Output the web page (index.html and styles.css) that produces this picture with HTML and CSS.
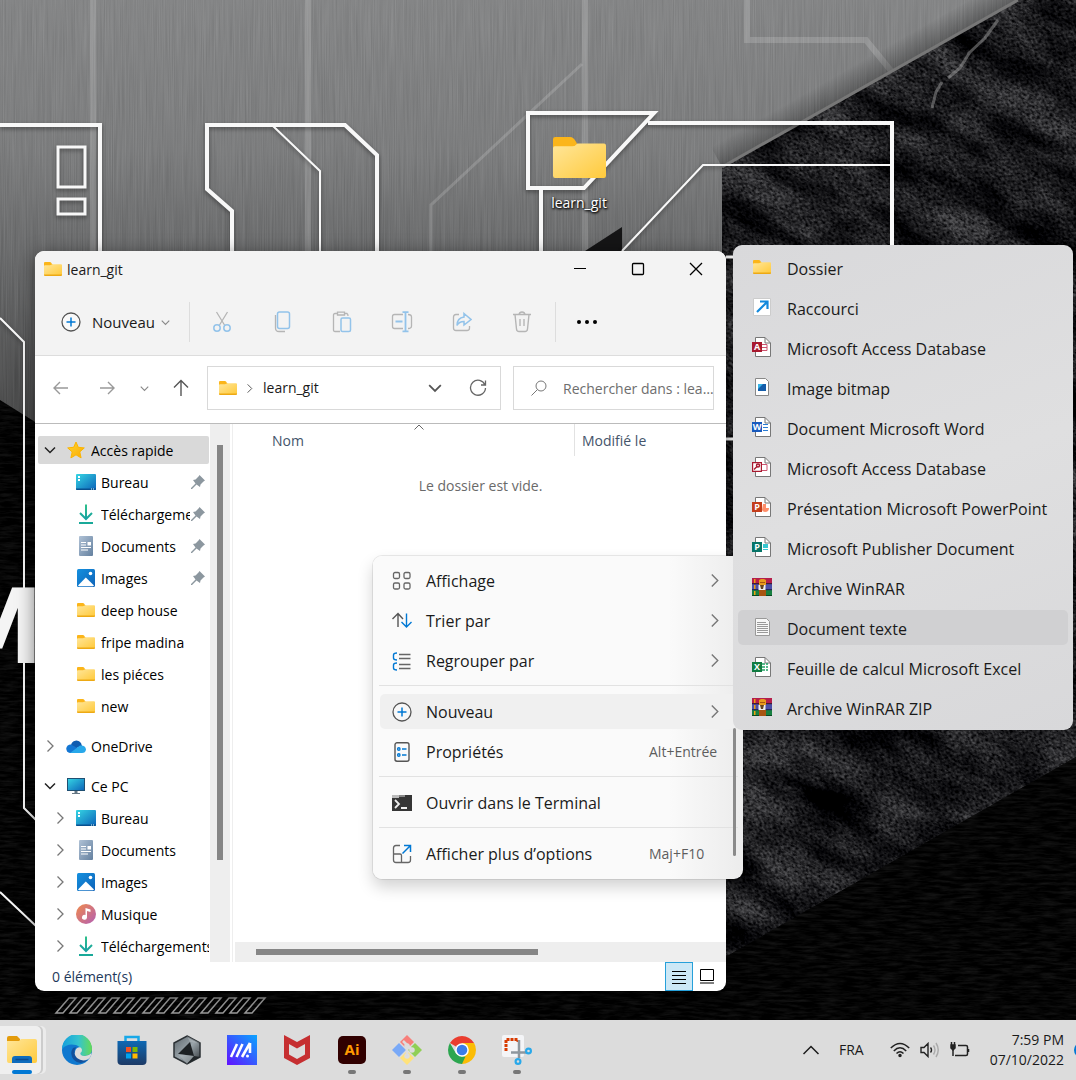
FILE: index.html
```html
<!DOCTYPE html>
<html lang="fr">
<head>
<meta charset="utf-8">
<title>learn_git</title>
<link rel="stylesheet" href="styles.css">
</head>
<body>
<svg class="defs" aria-hidden="true">
  <defs>
    <linearGradient id="gFolder" x1="0" y1="0" x2="1" y2="1"><stop offset="0" stop-color="#ffe69a"/><stop offset="1" stop-color="#ffca3c"/></linearGradient>
    <linearGradient id="gDesk" x1="0" y1="0" x2="1" y2="1"><stop offset="0" stop-color="#36d6e4"/><stop offset="1" stop-color="#0b62b8"/></linearGradient>
    <linearGradient id="gDown" x1="0" y1="0" x2="0" y2="1"><stop offset="0" stop-color="#2fc08a"/><stop offset="1" stop-color="#17a2a2"/></linearGradient>
    <linearGradient id="gDoc" x1="0" y1="0" x2="1" y2="1"><stop offset="0" stop-color="#b0c2d6"/><stop offset="1" stop-color="#64809f"/></linearGradient>
    <linearGradient id="gImg" x1="0" y1="0" x2="1" y2="1"><stop offset="0" stop-color="#1490df"/><stop offset="1" stop-color="#0f63b8"/></linearGradient>
    <linearGradient id="gMus" x1="0" y1="0" x2="1" y2="1"><stop offset="0" stop-color="#f08a4b"/><stop offset="1" stop-color="#b35fb4"/></linearGradient>
    <linearGradient id="gStar" x1="0" y1="0" x2="1" y2="1"><stop offset="0" stop-color="#ffd633"/><stop offset="1" stop-color="#fba900"/></linearGradient>
    <linearGradient id="gStore" x1="0" y1="0" x2="0" y2="1"><stop offset="0" stop-color="#0e68b3"/><stop offset="1" stop-color="#1d3a66"/></linearGradient>
    <linearGradient id="gMa" x1="1" y1="0" x2="0" y2="1"><stop offset="0" stop-color="#0aa5ff"/><stop offset="1" stop-color="#6210ff"/></linearGradient>
    <linearGradient id="gEdgeTop" x1="0" y1="0" x2="1" y2="0"><stop offset="0" stop-color="#149fdc"/><stop offset=".55" stop-color="#35c3cf"/><stop offset="1" stop-color="#65db55"/></linearGradient>
    <linearGradient id="gCube" x1="0" y1="0" x2="1" y2="1"><stop offset="0" stop-color="#5c656b"/><stop offset=".5" stop-color="#9aa4aa"/><stop offset="1" stop-color="#2c3135"/></linearGradient>

    <symbol id="i-folder" viewBox="0 0 18 14"><path fill="#fbb51a" d="M0 1Q0 0 1 0H6Q7 0 8 2L9 3V6H0Z"/><path fill="url(#gFolder)" d="M0 4Q0 3.200 1 3.200H6L8.500 2.300H17Q18 2.300 18 3.300V13H0Z"/><path fill="#eda914" d="M0 12.600H18V13.200Q18 14 17 14H1Q0 14 0 13.200Z"/></symbol>
    <symbol id="i-star" viewBox="0 0 18 18"><path fill="url(#gStar)" stroke="#fbb400" stroke-width="1" stroke-linejoin="round" d="M9 1 11.300 6.300 17.300 6.900 12.800 10.900 14.100 16.900 9 13.800 3.900 16.900 5.200 10.900 .7 6.900 6.700 6.300Z"/></symbol>
    <symbol id="i-desktop" viewBox="0 0 20 16"><rect width="20" height="16" rx="1" fill="url(#gDesk)"/><path fill="#fff" d="M2 2h2v2H2zM2 5h2v2H2z"/><path fill="#08508f" d="M0 14.500h20V15q0 1-1 1H1q-1 0-1-1z"/><path fill="#dff" d="M15 14.500h1v1h-1zM17 14.500h1v1h-1z"/></symbol>
    <symbol id="i-download" viewBox="0 0 16 20"><path fill="none" stroke="url(#gDown)" stroke-width="2" d="M8 .5V15M2 9 8 15 14 9"/><path fill="#19a999" d="M1 18h14v2H1z"/></symbol>
    <symbol id="i-doc" viewBox="0 0 14 20"><rect width="14" height="20" rx="1" fill="url(#gDoc)"/><path stroke="#fff" stroke-width="1.200" d="M2 6.500h5M2 9h5M2 11.500h10M2 14h7"/><path fill="#fff" d="M8.500 6h3.500v3.500H8.500z"/></symbol>
    <symbol id="i-image" viewBox="0 0 18 18"><rect width="18" height="18" rx="1.500" fill="url(#gImg)"/><path fill="#fff" d="M1 16.500 8.800 8.600 17 16.500 16 17.200H2Z"/><circle cx="13.500" cy="4.500" r="1.800" fill="#fff"/></symbol>
    <symbol id="i-music" viewBox="0 0 20 20"><circle cx="10" cy="10" r="10" fill="url(#gMus)"/><path fill="#fff" d="M9.500 4l5 1.500v2.500L11 7v6.500A2.500 2.500 0 1 1 9.500 11z"/></symbol>
    <symbol id="i-cloud" viewBox="0 0 20 13"><path fill="#0f5cb0" d="M5 5A5.500 5.500 0 0 1 15 3L16 6 8 9Z"/><path fill="#1376d3" d="M4 13A4.200 4.200 0 0 1 5 4.600L13 9 6 13Z"/><path fill="#28a8ea" d="M4 13 14 5.500Q19.500 5 20 9.500 19.500 13 16 13Z"/></symbol>
    <symbol id="i-pc" viewBox="0 0 18 16"><rect x=".5" y=".5" width="17" height="12" fill="url(#gDesk)" stroke="#1f4f72"/><path fill="#667784" d="M7.500 13h3v2h2.500v1H5v-1h2.500z"/></symbol>
    <symbol id="i-pin" viewBox="0 0 14 14"><path fill="#8c979f" d="M8.500 0 14 5.500 12.500 6.500 9.500 9.500 9 12 5.500 9.500 1 14H0V13L4.500 8.500 2 5 4.500 4.500 7.500 1.500Z"/></symbol>
    <symbol id="i-down" viewBox="0 0 12 12"><path fill="none" stroke="currentColor" stroke-width="1.500" d="M1 3.500 6 8.500 11 3.500"/></symbol>
    <symbol id="i-right" viewBox="0 0 12 12"><path fill="none" stroke="currentColor" stroke-width="1.300" d="M3.500 .5 9 6 3.500 11.500"/></symbol>
    <symbol id="i-up" viewBox="0 0 16 10"><path fill="none" stroke="currentColor" stroke-width="1.500" d="M.5 9 8 1.500 15.500 9"/></symbol>
    <symbol id="i-plus" viewBox="0 0 20 20"><circle cx="10" cy="10" r="9" fill="#fff" fill-opacity=".5" stroke="#555" stroke-width="1.300"/><path stroke="#0078d4" stroke-width="1.500" d="M5.500 10h9M10 5.500v9"/></symbol>
    <symbol id="i-page" viewBox="0 0 18 20"><path fill="#fff" stroke="#777" d="M2.500.5h9.500l5.500 5.500v13.500h-15z"/><path fill="none" stroke="#777" d="M12 .5v5.500h5.500"/></symbol>
    <symbol id="i-rar" viewBox="0 0 20 18"><path fill="#b51f4b" d="M0 0h20v6H0z"/><path fill="#4a4fa8" d="M0 6h20v6H0z"/><path fill="#178040" d="M0 12h20v6H0z"/><path fill="#431a34" d="M0 5h20v1.200H0z"/><path fill="#25265c" d="M0 11h20v1.200H0z"/><path fill="#0a4722" d="M0 17h20v1H0z"/><path fill="#f0a010" d="M2 1h1.500v4H2zM2 7h1.500v4H2zM2 13h1.500v4H2z"/><path fill="#e79a1e" d="M7 2l2-1h3l2 1v5H7z"/><path fill="#a85512" d="M7 12h7v6H7zM8 4h5v1H8z"/><path fill="#eee" d="M6.500 7h7v5h-7z"/><path fill="#66431f" d="M8 7h4l-1 4H9z"/></symbol>
  </defs>
</svg>

<div class="screen">
<main class="desktop">
  <svg class="wallpaper" viewBox="0 0 1076 1080" preserveAspectRatio="xMinYMin slice" aria-hidden="true">
    <defs>
      <linearGradient id="steel" x1="0" y1="0" x2="0" y2="1"><stop offset="0" stop-color="#858687"/><stop offset=".3" stop-color="#7c7d7e"/><stop offset=".55" stop-color="#646566"/><stop offset="1" stop-color="#333"/></linearGradient>
      <linearGradient id="edgeShade" gradientUnits="userSpaceOnUse" x1="870" y1="84" x2="858" y2="63"><stop offset="0" stop-color="#000" stop-opacity=".3"/><stop offset="1" stop-color="#000" stop-opacity="0"/></linearGradient>
      <filter id="brush" x="0" y="0" width="100%" height="100%" color-interpolation-filters="sRGB"><feTurbulence type="fractalNoise" baseFrequency=".9 .015" numOctaves="2" seed="4"/><feColorMatrix values="1 0 0 0 0  1 0 0 0 0  1 0 0 0 0  0 0 0 0 .1"/></filter>
      <filter id="rock" x="0" y="0" width="100%" height="100%" color-interpolation-filters="sRGB">
        <feTurbulence type="fractalNoise" baseFrequency=".012 .03" numOctaves="3" seed="8"/>
        <feColorMatrix values="1 0 0 0 0  1 0 0 0 0  1 0 0 0 0  0 0 0 0 1" result="large"/>
        <feTurbulence type="fractalNoise" baseFrequency=".3 .45" numOctaves="4" seed="21"/>
        <feColorMatrix values="1 0 0 0 0  1 0 0 0 0  1 0 0 0 0  0 0 0 0 1" result="fine"/>
        <feComposite in="large" in2="fine" operator="arithmetic" k1="2" k2="0" k3="0" k4="0"/>
        <feColorMatrix values=".44 0 0 0 -.115  .44 0 0 0 -.115  .44 0 0 0 -.105  0 0 0 0 1"/>
      </filter>
      <filter id="leather" x="0" y="0" width="100%" height="100%" color-interpolation-filters="sRGB"><feTurbulence type="fractalNoise" baseFrequency=".05 .35" numOctaves="4" seed="3"/><feColorMatrix values=".16 0 0 0 -.06  .16 0 0 0 -.06  .16 0 0 0 -.06  0 0 0 0 1"/></filter>
      <clipPath id="cRock"><path d="M722 167 1018 0H1076V757L726 957H722Z"/></clipPath>
      <clipPath id="cDark"><path d="M720 960 1076 757V1080H0V400L40 425 300 960Z"/></clipPath>
    </defs>
    <rect width="1076" height="500" fill="url(#steel)"/>
    <rect width="1076" height="500" filter="url(#brush)"/>
    <g fill="none" stroke="#fff" stroke-opacity=".16" stroke-width="6"><path d="M93 0V251M308 0V251M585 0V251M747 0V40H866L892 72"/><path stroke-width="3" d="M582 64 431 205V251"/></g>
    <path fill="url(#edgeShade)" d="M722 167 1018 0H970L710 145Z"/>
    <g clip-path="url(#cRock)"><rect x="500" y="-600" width="1300" height="1500" transform="rotate(30)" filter="url(#rock)"/><path fill="none" stroke="#aaa" stroke-opacity=".45" stroke-width="3" d="M998 20 985 38 968 54M970 52 960 68 948 78M942 82 936 92 932 108"/></g>
    <g clip-path="url(#cDark)"><rect y="380" width="1076" height="700" filter="url(#leather)"/></g>
    <path stroke="#777" stroke-width="3" fill="none" d="M722 167 1018 0"/>
    <path fill="#151516" d="M585 251 622 227V251Z"/>
    <g class="lines" fill="none" stroke="#f8f8f8" stroke-width="4">
      <path d="M0 125H100V251M232 251V211L207 189V125H345L377 155V251M528 113H654L584 188H528ZM648 123H892V251M541 188V251"/>
      <path stroke-width="3" d="M58 147H85V187H58ZM58 199H85V214H58ZM726 257H734M726 439H734"/>
      <path stroke-width="2" d="M273 126 320 171V251M622 251 703 165H892M0 318 24 342V808L36 820M0 892 36 926"/>
      <path stroke="#999" stroke-width="1.500" d="M56 1013l13-15h7l-13 15zM70 1013l13-15h7l-13 15zM85 1013l13-15h7l-13 15zM99 1013l13-15h7l-13 15zM114 1013l13-15h7l-13 15zM128 1013l13-15h7l-13 15zM143 1013l13-15h7l-13 15zM157 1013l13-15h7l-13 15zM172 1013l13-15h7l-13 15zM186 1013l13-15h7l-13 15zM201 1013l13-15h7l-13 15zM216 1013l13-15h7l-13 15zM230 1013l13-15h7l-13 15zM245 1013l13-15h7l-13 15z"/>
    </g>
    <text class="wallmark" x="-50" y="663">M</text>
  </svg>

  <button class="shortcut"><svg width="53" height="41" viewBox="0 0 18 14" preserveAspectRatio="none"><path fill="#fbb51a" d="M0 .8Q0 0 .8 0H5.800Q7 0 7.800 1.600L8.500 3V6H0Z"/><path fill="url(#gFolder)" d="M0 3.800Q0 3.200.6 3.200H6.500Q7.500 3.200 8.300 2.200H17.300Q18 2.200 18 2.900V13.200Q18 14 17.300 14H.7Q0 14 0 13.200Z"/></svg><span>learn_git</span></button>

  <section class="window" aria-label="learn_git">
    <header class="titlebar">
      <svg width="18" height="14"><use href="#i-folder"/></svg>
      <h1>learn_git</h1>
      <div class="caption">
        <button aria-label="Réduire"><svg width="14" height="14"><path stroke="#000" d="M1 6.500h12"/></svg></button>
        <button aria-label="Agrandir"><svg width="14" height="14"><rect x="1.500" y="1.500" width="11" height="11" rx="1" fill="none" stroke="#000" stroke-width="1.300"/></svg></button>
        <button aria-label="Fermer"><svg width="14" height="14"><path stroke="#000" stroke-width="1.300" d="M1 1 13 13M13 1 1 13"/></svg></button>
      </div>
    </header>
    <div class="toolbar">
      <button class="new"><svg width="20" height="20"><use href="#i-plus"/></svg><span>Nouveau</span><svg class="dim" width="9" height="9"><use href="#i-down"/></svg></button>
      <div class="tools">
        <button aria-label="Couper"><svg width="20" height="22" fill="none" stroke="#b5b5b5" stroke-width="1.300"><path d="M4.500 1 12.500 14M15.500 1 7.500 14"/><g stroke="#93c3ea" stroke-width="1.500"><circle cx="5" cy="17" r="3.200"/><circle cx="15" cy="17" r="3.200"/></g></svg></button>
        <button aria-label="Copier"><svg width="20" height="22" fill="none" stroke="#b5b5b5" stroke-width="1.300"><path d="M3.500 4V17Q3.500 20.500 7 20.500H13"/><rect x="5.500" y="1" width="12" height="16.500" rx="2" stroke="#93c3ea" stroke-width="1.500"/></svg></button>
        <button aria-label="Coller"><svg width="20" height="22" fill="none" stroke="#b5b5b5" stroke-width="1.300"><path d="M8 20.500H3Q1.500 20.500 1.500 19V4Q1.500 2.500 3 2.500H5M13 2.500H15Q16 3 16 5M5.500 1.200H12.500V4H5.500Z"/><rect x="9" y="7" width="9.500" height="13.500" rx="1.500" stroke="#93c3ea" stroke-width="1.500"/></svg></button>
        <button aria-label="Renommer"><svg width="22" height="22" fill="none" stroke="#b5b5b5" stroke-width="1.300"><path d="M12 3.500H3.500Q1.500 3.500 1.500 5.500V15.500Q1.500 17.500 3.500 17.500H12M17 3.500Q20.500 3.500 20.500 6V15Q20.500 17.500 17 17.500"/><path stroke="#93c3ea" stroke-width="1.800" d="M4.500 10.500H11.500M14.500 1.500V20M11.500 1.200H17.500M11.500 20.300H17.500"/></svg></button>
        <button aria-label="Partager"><svg width="20" height="22" fill="none" stroke="#b5b5b5" stroke-width="1.300"><path d="M7 3.500H4Q1.500 3.500 1.500 6V17Q1.500 19.500 4 19.500H15Q17.500 19.500 17.500 17V15"/><path stroke="#93c3ea" stroke-width="1.500" d="M12 2.500 19 8.500 12 14V10.500Q7 10.500 5 14.500 5 7 12 6Z"/></svg></button>
        <button aria-label="Supprimer"><svg width="20" height="22" fill="none" stroke="#b5b5b5" stroke-width="1.400"><path d="M1 3.500H19M7 3.500Q7.500 1 10 1T13 3.500M3 3.500 4.500 18Q4.700 20.500 7 20.500H13Q15.300 20.500 15.500 18L17 3.500M8 8V15M12 8V15"/></svg></button>
      </div>
      <button class="more" aria-label="Voir plus"><svg width="20" height="6"><circle cx="2" cy="3" r="2"/><circle cx="10" cy="3" r="2"/><circle cx="18" cy="3" r="2"/></svg></button>
    </div>
    <div class="navbar">
      <div class="arrows">
        <button aria-label="Précédent"><svg width="16" height="14" stroke="#999"><path d="M15 7H1.500M7 1 1 7 7 13"/></svg></button>
        <button aria-label="Suivant"><svg width="16" height="14" stroke="#999"><path d="M1 7H14.500M9 1 15 7 9 13"/></svg></button>
        <button class="recent dim" aria-label="Emplacements récents"><svg width="9" height="9"><use href="#i-down"/></svg></button>
        <button aria-label="Dossier parent"><svg width="16" height="18" stroke="#555"><path d="M8 17V1.500M1 8.500 8 1.500 15 8.500"/></svg></button>
      </div>
      <div class="address">
        <svg width="18" height="14"><use href="#i-folder"/></svg>
        <svg class="mid" width="9" height="9"><use href="#i-right"/></svg>
        <a href="#">learn_git</a>
        <button class="mid" aria-label="Historique"><svg width="14" height="14"><use href="#i-down"/></svg></button>
        <button aria-label="Actualiser"><svg width="18" height="18" fill="none" stroke="#666" stroke-width="1.300"><path d="M16 6A7.500 7.500 0 1 0 16.500 9M16.500 1.500V6H12"/></svg></button>
      </div>
      <label class="search"><svg width="16" height="16" fill="none" stroke="#777"><circle cx="10" cy="6" r="5"/><path d="M6.500 9.500.5 15.500"/></svg><input type="text" placeholder="Rechercher dans : learn_git" aria-label="Rechercher"></label>
    </div>
    <div class="content">
      <nav class="tree">
        <a class="node selected" href="#"><svg class="open" width="12" height="12"><use href="#i-down"/></svg><svg class="ico" width="20" height="18"><use href="#i-star"/></svg><span>Accès rapide</span></a>
        <a class="node child" href="#"><svg class="ico" width="20" height="16"><use href="#i-desktop"/></svg><span>Bureau</span><svg width="14" height="14"><use href="#i-pin"/></svg></a>
        <a class="node child" href="#"><svg class="ico" width="20" height="20"><use href="#i-download"/></svg><span>Téléchargements</span><svg width="14" height="14"><use href="#i-pin"/></svg></a>
        <a class="node child" href="#"><svg class="ico" width="20" height="20"><use href="#i-doc"/></svg><span>Documents</span><svg width="14" height="14"><use href="#i-pin"/></svg></a>
        <a class="node child" href="#"><svg class="ico" width="20" height="18"><use href="#i-image"/></svg><span>Images</span><svg width="14" height="14"><use href="#i-pin"/></svg></a>
        <a class="node child" href="#"><svg class="ico" width="20" height="14"><use href="#i-folder"/></svg><span>deep house</span></a>
        <a class="node child" href="#"><svg class="ico" width="20" height="14"><use href="#i-folder"/></svg><span>fripe madina</span></a>
        <a class="node child" href="#"><svg class="ico" width="20" height="14"><use href="#i-folder"/></svg><span>les piéces</span></a>
        <a class="node child" href="#"><svg class="ico" width="20" height="14"><use href="#i-folder"/></svg><span>new</span></a>
        <a class="node root" href="#"><svg class="shut" width="12" height="12"><use href="#i-right"/></svg><svg class="ico" width="20" height="13"><use href="#i-cloud"/></svg><span>OneDrive</span></a>
        <a class="node root" href="#"><svg class="open" width="12" height="12"><use href="#i-down"/></svg><svg class="ico" width="20" height="16"><use href="#i-pc"/></svg><span>Ce PC</span></a>
        <a class="node sub" href="#"><svg class="shut" width="12" height="12"><use href="#i-right"/></svg><svg class="ico" width="20" height="16"><use href="#i-desktop"/></svg><span>Bureau</span></a>
        <a class="node sub" href="#"><svg class="shut" width="12" height="12"><use href="#i-right"/></svg><svg class="ico" width="20" height="20"><use href="#i-doc"/></svg><span>Documents</span></a>
        <a class="node sub" href="#"><svg class="shut" width="12" height="12"><use href="#i-right"/></svg><svg class="ico" width="20" height="18"><use href="#i-image"/></svg><span>Images</span></a>
        <a class="node sub" href="#"><svg class="shut" width="12" height="12"><use href="#i-right"/></svg><svg class="ico" width="20" height="20"><use href="#i-music"/></svg><span>Musique</span></a>
        <a class="node sub" href="#"><svg class="shut" width="12" height="12"><use href="#i-right"/></svg><svg class="ico" width="20" height="20"><use href="#i-download"/></svg><span>Téléchargements</span></a>
      </nav>
      <div class="vbar"><i></i></div>
      <div class="files">
        <div class="columns"><button class="name"><span>Nom</span><svg width="10" height="6" fill="none" stroke="#666"><path d="M.5 5.500 5 1 9.500 5.500"/></svg></button><button class="date"><span>Modifié le</span></button></div>
        <p class="empty">Le dossier est vide.</p>
        <div class="hbar"><i></i></div>
      </div>
    </div>
    <footer class="status">
      <span>0 élément(s)</span>
      <button class="view on" aria-label="Détails"><svg width="14" height="14" stroke="#000"><path d="M0 1.500H14M0 5.500H14M0 9.500H14M0 13.500H14"/></svg></button>
      <button class="view" aria-label="Grandes icônes"><svg width="14" height="15" stroke="#000" fill="#fff"><path d="M.5.500H13.500V11.500H.5ZM0 14H14"/></svg></button>
    </footer>
  </section>

  <div class="menu context" role="menu">
    <button role="menuitem"><svg width="20" height="20" fill="none" stroke="#666" stroke-width="1.300"><rect x="1.500" y="1.500" width="6" height="6" rx="1.500"/><rect x="12" y="1.500" width="6" height="6" rx="1.500"/><rect x="1.500" y="12" width="6" height="6" rx="1.500"/><rect x="12" y="12" width="6" height="6" rx="1.500"/></svg><span>Affichage</span><svg class="go" width="13" height="13"><use href="#i-right"/></svg></button>
    <button role="menuitem"><svg width="20" height="20" fill="none" stroke="#555" stroke-width="1.400"><path d="M6 16V2.500M.5 8 6 2.500 11 8"/><path stroke="#0078d4" d="M14.500 2.500V16M9.500 11 14.500 16 19.500 11"/></svg><span>Trier par</span><svg class="go" width="13" height="13"><use href="#i-right"/></svg></button>
    <button role="menuitem"><svg width="20" height="20" fill="none" stroke="#666" stroke-width="1.400"><path d="M7 3.500H18.500M7 7.500H18.500M7 13.500H18.500M7 17.500H18.500"/><path stroke="#0078d4" d="M5 2Q1.500 2 1.500 4V7Q1.500 9 5 9M5 12Q1.500 12 1.500 14V17Q1.500 19 5 19"/></svg><span>Regrouper par</span><svg class="go" width="13" height="13"><use href="#i-right"/></svg></button>
    <hr>
    <button class="hot" role="menuitem"><svg width="20" height="20"><use href="#i-plus"/></svg><span>Nouveau</span><svg class="go" width="13" height="13"><use href="#i-right"/></svg></button>
    <button role="menuitem"><svg width="20" height="20" fill="none" stroke="#555" stroke-width="1.400"><rect x="3" y=".8" width="14" height="18.400" rx="2"/><g stroke="#0078d4"><circle cx="6.800" cy="7" r="1.200"/><circle cx="6.800" cy="13" r="1.200"/><path d="M10 7h4.500M10 13h4.500"/></g></svg><span>Propriétés</span><kbd>Alt+Entrée</kbd></button>
    <hr>
    <button role="menuitem"><svg width="20" height="20"><path fill="#353535" d="M0 2h20v16H0z"/><path fill="#bbb" d="M0 2h7v3H0z"/><path fill="#888" d="M7 2h6v2H7z"/><path fill="none" stroke="#eee" stroke-width="1.800" d="M3 7l4 4-4 4M9 15h6"/></svg><span>Ouvrir dans le Terminal</span></button>
    <hr>
    <button role="menuitem"><svg width="20" height="20" fill="none" stroke="#666" stroke-width="1.300"><path d="M8 1.500H4Q1.500 1.500 1.500 4V16Q1.500 18.500 4 18.500H16Q18.500 18.500 18.500 16V12M1.500 10H8Q9.500 10 9.500 11.500V18.500"/><path stroke="#0078d4" stroke-width="1.500" d="M10.500 9.500 18.500 1.500M12 1.500H18.500V8"/></svg><span>Afficher plus d’options</span><kbd>Maj+F10</kbd></button>
    <div class="menubar"></div>
  </div>

  <div class="menu submenu" role="menu">
    <button role="menuitem"><svg width="20" height="14"><use href="#i-folder"/></svg><span>Dossier</span></button>
    <button role="menuitem"><svg width="20" height="20"><path fill="#fff" stroke="#ccc" d="M1.500 1.500h17v17h-17z"/><path fill="none" stroke="#1389dc" stroke-width="2.200" d="M5 15 15 5M8 4.500h7.500V12"/></svg><span>Raccourci</span></button>
    <button role="menuitem"><svg width="20" height="20"><use href="#i-page"/><path fill="none" stroke="#cc5570" d="M10 7.500h5v6h-5M10 10.500h5"/><path fill="#a8192f" d="M0 5h10v10H0z"/><text x="5" y="13" class="letter">A</text></svg><span>Microsoft Access Database</span></button>
    <button role="menuitem"><svg width="20" height="20"><path fill="#fff" stroke="#888" d="M3.500 1.500h10l3 3v14h-13z"/><path fill="#145ca9" d="M6 7h8v7H6z"/><path fill="#38b5e8" d="M6 7h5l-5 5z"/></svg><span>Image bitmap</span></button>
    <button role="menuitem"><svg width="20" height="20"><use href="#i-page"/><path stroke="#2b7cd3" d="M11 7.500h5M11 10.500h5M11 13.500h5"/><path fill="#185abd" d="M0 5h10v10H0z"/><text x="5" y="13" class="letter">W</text></svg><span>Document Microsoft Word</span></button>
    <button role="menuitem"><svg width="20" height="20"><use href="#i-page"/><path fill="none" stroke="#cc5570" d="M10 7.500h5v6h-5"/><path fill="#fff" stroke="#a8192f" stroke-width="1.200" d="M.6 5.600h8.800v8.800H.6z"/><circle cx="6" cy="8.500" r="1.500" fill="none" stroke="#a8192f" stroke-width="1.500"/><path stroke="#a8192f" stroke-width="1.500" d="M5 9.500 2 12.500"/></svg><span>Microsoft Access Database</span></button>
    <button role="menuitem"><svg width="20" height="20"><use href="#i-page"/><path fill="#ff8f6b" d="M11 7h3v4h3q0 4-4 4-2 0-3-2z"/><path fill="#c43e1c" d="M0 5h10v10H0z"/><text x="5" y="13" class="letter">P</text></svg><span>Présentation Microsoft PowerPoint</span></button>
    <button role="menuitem"><svg width="20" height="20"><use href="#i-page"/><path fill="#37c6d0" d="M11 7h5v4h-5zM11 12h5v1h-5z"/><path fill="#077568" d="M0 5h10v10H0z"/><text x="5" y="13" class="letter">P</text></svg><span>Microsoft Publisher Document</span></button>
    <button role="menuitem"><svg width="20" height="18"><use href="#i-rar"/></svg><span>Archive WinRAR</span></button>
    <button class="hot" role="menuitem"><svg width="20" height="20"><path fill="#f7f7f7" stroke="#999" d="M3.500 1.500h11l3 3v14h-14z"/><path stroke="#999" d="M5 5.500h9M5 7.500h11M5 9.500h11M5 11.500h11M5 13.500h11M5 15.500h11"/></svg><span>Document texte</span></button>
    <button role="menuitem"><svg width="20" height="20"><use href="#i-page"/><path stroke="#21a366" stroke-width="1.500" stroke-dasharray="3 1" d="M10 7h6M10 10h6M10 13h6"/><path fill="#107c41" d="M0 5h10v10H0z"/><text x="5" y="13" class="letter">X</text></svg><span>Feuille de calcul Microsoft Excel</span></button>
    <button role="menuitem"><svg width="20" height="18"><use href="#i-rar"/></svg><span>Archive WinRAR ZIP</span></button>
  </div>
</main>

<footer class="taskbar">
  <div class="apps">
    <button class="active" aria-label="Explorateur"><svg width="30" height="30"><path fill="#e39b0b" d="M0 3Q0 1 2 1H10L13 4V8H0Z"/><path fill="url(#gFolder)" d="M0 6H12L14 4H28Q30 4 30 6V26Q30 28 28 28H2Q0 28 0 26Z"/><path fill="#0f6cbd" d="M5 28V24Q5 21 8 21H22Q25 21 25 24V28Z"/><path stroke="#0b4a8f" stroke-width="1.500" d="M8.500 24.500h13"/></svg></button>
    <button aria-label="Edge"><svg width="30" height="30"><circle cx="15" cy="15" r="15" fill="#0f78cf"/><path fill="url(#gEdgeTop)" d="M0 14A15 15 0 0 1 30 14Q30 21 22 21 17.500 21 18.500 18 20 12 14 10 5 8 0 14Z"/><path fill="#12509b" d="M11 13Q7 19 12 25 18 31 26 25 21 26 16.500 23.500 10 19 14 12Z"/><path fill="#dcdcdc" d="M20 15Q20 17 18.500 18 18 20.500 22 21 26 21.500 29.500 18 29 23 25.500 24.500 20 27 15 23 11 19 14 14 16 11.500 18.500 12.500 20 13.500 20 15Z"/></svg></button>
    <button aria-label="Store"><svg width="30" height="30"><path fill="none" stroke="#18a8e8" stroke-width="2.500" d="M8.500 7V2H21.500V7"/><path fill="url(#gStore)" d="M.5 6H29.500V26Q29.500 30 25.500 30H4.500Q.5 30 .5 26Z"/><path fill="#f25022" d="M9 12h5v5H9z"/><path fill="#7fba00" d="M15.500 12h5v5h-5z"/><path fill="#00a4ef" d="M9 18.500h5v5H9z"/><path fill="#ffb900" d="M15.500 18.500h5v5h-5z"/></svg></button>
    <button aria-label="Armoury Crate"><svg width="30" height="30"><path fill="url(#gCube)" stroke="#2b3034" stroke-width="1.500" d="M15 1 28 8V22L15 29 2 22V8Z"/><path fill="#1d2124" d="M18 7 22 21 6 19Z"/><path fill="#b3bbc0" d="M15 1 28 8 18 7ZM6 19 22 21 15 29Z" opacity=".5"/><path fill="#22272a" d="M22 21 28 22 15 29Z"/></svg></button>
    <button aria-label="MyASUS"><svg width="30" height="30"><path fill="url(#gMa)" d="M0 0h30v30H0z"/><path stroke="#fff" stroke-width="2.600" d="M4 22 10 9M9.500 22 15.500 9M15 22 23 8M23 8V18"/><circle cx="20.500" cy="21" r="1.500" fill="#fff"/></svg></button>
    <button aria-label="McAfee"><svg width="30" height="30"><path fill="#c62f31" fill-rule="evenodd" d="M2 0 15 7 28 0V23L15 30 2 23ZM7 9V19.500L15 24 23 19.500V9L15 13.500Z"/></svg></button>
    <button class="run" aria-label="Illustrator"><svg width="30" height="30"><rect x="1" y="1" width="28" height="28" rx="5" fill="#310000"/><text x="15" y="19.500" class="ai">Ai</text></svg></button>
    <button class="run" aria-label="Git"><svg width="30" height="30"><path fill="#f77f7a" d="M15 0 22 7 15 14 8 7Z"/><path fill="#79a9f7" d="M7 8 14 15 7 22 0 15Z"/><path fill="#90cf55" d="M23 8 30 15 23 22 16 15Z"/><path fill="#ffe27a" d="M15 16 22 23 15 30 8 23Z"/><g stroke="#ddd" stroke-width="2.500" fill="#ddd"><path d="M11 6 19 14M15 11V22"/><circle cx="15" cy="11" r="1.500"/><circle cx="20" cy="15" r="1.500"/><circle cx="15" cy="21" r="1.500"/></g></svg></button>
    <button class="run" aria-label="Chrome"><svg width="28" height="28"><path fill="#ea3d2f" d="M14 14 1.900 7A14 14 0 0 1 26.100 7Z"/><path fill="#fbbc05" d="M14 14V7H26.100A14 14 0 0 1 14 28Z"/><path fill="#2ca64f" d="M1.900 7 8 17.500 14 20.500H17.500L14 28A14 14 0 0 1 1.900 7Z"/><circle cx="14" cy="14" r="6.800" fill="#fff"/><circle cx="14" cy="14" r="5.300" fill="#3b7de8"/></svg></button>
    <button class="run" aria-label="Outil Capture"><svg width="30" height="30"><rect width="22" height="22" rx="2" fill="#f4f5f7"/><path fill="none" stroke="#d83b01" stroke-width="3" stroke-dasharray="3 1" d="M4 16V4.500H16V7"/><path stroke="#8e979e" stroke-width="2.500" d="M17 5V23M9 17.500H24"/><g fill="none" stroke="#28a8ea" stroke-width="2.200"><circle cx="26.500" cy="16" r="2.400"/><circle cx="16" cy="26.500" r="2.400"/></g></svg></button>
  </div>
  <div class="tray">
    <button aria-label="Icônes masquées"><svg width="16" height="10"><use href="#i-up"/></svg></button>
    <button class="lang">FRA</button>
    <button class="net" aria-label="Réseau, son, batterie">
      <svg width="20" height="16" fill="none" stroke="#222" stroke-width="1.500"><path d="M.8 6Q10-3 19.200 6M3.800 9Q10 2.500 16.200 9M6.500 11.500Q10 8 13.500 11.500"/><circle cx="10" cy="13.500" r="1" fill="#222"/></svg>
      <svg width="20" height="16" fill="none" stroke="#222" stroke-width="1.400"><path d="M1 5.500H4L8 1.500V14.500L4 10.500H1ZM10.500 5.500Q12.500 8 10.500 10.500"/><path stroke="#aaa" d="M13.500 3.500Q16.500 8 13.500 12.500M16 1Q20.500 8 16 15"/></svg>
      <svg width="20" height="16" fill="none" stroke="#222" stroke-width="1.500"><path d="M8 3.500H16Q17.500 3.500 17.500 5V12Q17.500 13.500 16 13.500H5M3 8V14"/><path fill="#222" d="M1 3H5V6L3 8 1 6ZM1.500 0V3M4.500 0V3M18.500 7V10"/></svg>
    </button>
    <button class="clock"><time>7:59 PM</time><time>07/10/2022</time></button>
    <span class="badge"></span>
  </div>
</footer>
</div>
</body>
</html>
```
FILE: styles.css
```css
* { box-sizing: border-box; }
body { margin: 0; overflow: hidden; font: 14px/20px "Open Sans", "Noto Sans", sans-serif; color: #1a1a1a; background: #0a0a0a; }
button { display: flex; align-items: center; justify-content: center; margin: 0; padding: 0; border: 0; background: none; font: inherit; color: inherit; }
a { color: inherit; text-decoration: none; }
svg { display: block; flex: none; }
.defs { position: absolute; width: 0; height: 0; }
.dim { color: #888; }
.mid { color: #555; }

.screen { display: flex; flex-direction: column; height: 100vh; }
.desktop { position: relative; flex: 1; overflow: hidden; }
.wallpaper { position: absolute; top: 0; left: 0; width: 100%; height: 100vh; }
.lines { filter: drop-shadow(0 2px 2px rgba(0, 0, 0, .4)); }
.wallmark { font: 700 104px "Liberation Sans Narrow", "DejaVu Sans Condensed", sans-serif; fill: #f4f4f4; }

.shortcut { position: absolute; left: 534px; top: 137px; width: 90px; flex-direction: column; gap: 15px; color: #fff; text-shadow: 0 1px 3px #000, 1px 1px 2px #000; }

/* Explorer window */
.window { position: absolute; left: 35px; top: 251px; width: 691px; height: 740px; display: flex; flex-direction: column; overflow: hidden; background: #fff; border-radius: 9px; box-shadow: 0 4px 18px rgba(0, 0, 0, .5); }
.titlebar { display: flex; align-items: center; gap: 5px; height: 36px; padding-left: 9px; background: #f3f3f3; }
.titlebar h1 { flex: 1; margin: 0; padding-top: 2px; font-size: 14px; font-weight: 400; }
.caption { display: flex; padding-right: 1px; }
.caption button { width: 58px; height: 36px; }
.toolbar { display: flex; align-items: center; height: 69px; padding-top: 2px; background: #f3f3f3; border-bottom: 1px solid #ddd; }
.new { width: 155px; height: 40px; gap: 6px; justify-content: flex-start; padding-left: 26px; border-right: 1px solid #ddd; font-size: 15px; }
.new span { padding-left: 5px; }
.tools { display: flex; height: 40px; padding: 0 3px 0 2px; border-right: 1px solid #ddd; }
.tools button { width: 60px; }
.more { width: 62px; height: 40px; }
.navbar { display: flex; align-items: center; height: 68px; padding: 0 12px 3px 3px; border-bottom: 1px solid #bbb; }
.arrows { display: flex; }
.arrows svg { fill: none; stroke-width: 1.400; }
.arrows button { width: 46px; height: 40px; }
.arrows .recent { width: 28px; }
.address { display: flex; align-items: center; flex: 1; min-width: 0; height: 44px; margin: 0 12px 0 3px; padding-left: 11px; border: 1px solid #d9d9d9; }
.address .mid { margin: 0 9px 0 8px; }
.address a { flex: 1; }
.address button { width: 30px; height: 40px; }
.address button.mid { margin: 0 6px 0 0; }
.address button:last-child { width: 44px; }
.search { display: flex; align-items: center; gap: 16px; width: 201px; height: 44px; padding-left: 17px; border: 1px solid #d9d9d9; }
.search input { flex: 1; min-width: 0; margin-right: -1px; padding: 2px 0 0; border: 0; outline: 0; background: none; font: inherit; text-overflow: ellipsis; }
.search input::placeholder { color: #6e6e6e; opacity: 1; }

.content { display: flex; flex: 1; min-height: 0; }
.tree { width: 175px; padding: 12px 1px 0 3px; overflow: hidden; }
.node { display: flex; align-items: center; gap: 5px; height: 28px; margin-bottom: 4px; padding-left: 6px; color: #000; white-space: nowrap; }
.node span { flex: 1; padding-top: 2px; overflow: hidden; }
.node > svg:last-child { margin: 0 4px 0 -4px; }
.node .ico { margin-left: 5px; }
.selected { background: #d9d9d9; border-radius: 2px; }
.child { padding-left: 33px; }
.root { margin: 12px 0 4px; }
.sub { padding-left: 16px; }
.open { color: #222; }
.shut { color: #777; }
.vbar { width: 20px; padding: 21px 7px 0; background: #eee; }
.vbar i { display: block; width: 6px; height: 415px; background: #868686; }
.files { display: flex; flex: 1; flex-direction: column; min-width: 0; margin-left: 2px; border-left: 1px solid #eee; padding-left: 2px; }
.columns { display: flex; height: 32px; color: #44546a; }
.columns button { justify-content: flex-start; }
.columns span { padding-top: 2px; }
.columns .name { position: relative; width: 340px; padding-left: 37px; border-right: 1px solid #e2e2e2; }
.columns .name svg { position: absolute; left: 179px; top: 0; }
.columns .date { padding-left: 7px; }
.empty { flex: 1; margin: 20px 0 0; text-align: center; color: #6a6a6a; }
.hbar { height: 20px; padding: 7px 0 0 21px; background: #eee; }
.hbar i { display: block; width: 282px; height: 6px; background: #868686; }
.status { display: flex; align-items: center; height: 29px; padding-right: 5px; color: #1e395b; }
.status span { flex: 1; padding-left: 17px; }
.view { width: 28px; height: 29px; }
.view.on { background: #cce8f6; border: 1px solid #26a0da; }

/* Menus */
.menu { position: absolute; display: flex; flex-direction: column; gap: 5px; border-radius: 9px; font-size: 16px; }
.menu button { height: 35px; gap: 14px; border-radius: 5px; text-align: left; white-space: nowrap; }
.menu span { flex: 1; }
.context { left: 373px; top: 556px; width: 370px; padding: 7px 6px 8px 7px; background: linear-gradient(90deg, #fafafa 80%, #ececec); box-shadow: 0 0 0 1px rgba(0, 0, 0, .08), 0 8px 16px rgba(0, 0, 0, .18); }
.context button { padding: 0 15px 0 12px; }
.context .hot { background: #f0f0f0; }
.context .go { color: #777; margin-right: 1px; }
.context hr { align-self: stretch; height: 1px; margin: 2px -1px 3px; border: 0; background: #e2e2e2; }
.context kbd { width: 73px; font: inherit; font-size: 14px; color: #5d5d5d; }
.menubar { position: absolute; right: 7px; bottom: 23px; width: 3px; height: 128px; border-radius: 2px; background: #8a8a8a; }
.submenu { left: 733px; top: 245px; width: 340px; padding: 5px; background: linear-gradient(160deg, #d9d9db, #dfdfe0 50%, #d8d8da); }
.submenu button { padding: 0 13px 0 14px; gap: 15px; }
.submenu button > svg { margin-bottom: 2px; }
.submenu span { padding-top: 2px; }
.submenu .hot { background: #d0d0d2; }
.letter { font: 700 9px "Open Sans", sans-serif; fill: #fff; text-anchor: middle; }

/* Taskbar */
.taskbar { position: relative; display: flex; justify-content: space-between; height: 60px; overflow: hidden; background: #dcdcdc; }
.apps { display: flex; margin-left: -6px; }
.apps button { position: relative; width: 55px; height: 60px; }
.apps .active { z-index: 0; }
.apps .active::before { content: ""; position: absolute; z-index: -1; inset: 6px 8px 6px 0; background: #efefef; border-radius: 5px; box-shadow: 2px 0 0 #ccc, 5px 0 0 #ebebeb; }
.apps .active::after, .apps .run::after { content: ""; position: absolute; bottom: 6px; width: 8px; height: 4px; border-radius: 2px; background: #777; }
.apps .active::after { width: 20px; background: #0078d4; }
.ai { font: 700 15px "Open Sans", sans-serif; fill: #ff9a00; text-anchor: middle; }
.tray { display: flex; align-items: center; gap: 20px; padding-right: 12px; }
.net { gap: 10px; margin-left: 6px; }
.clock { flex-direction: column; align-items: flex-end; }
.badge { position: absolute; right: -14px; top: 22px; width: 16px; height: 16px; border-radius: 8px; background: #0078d4; }
```
